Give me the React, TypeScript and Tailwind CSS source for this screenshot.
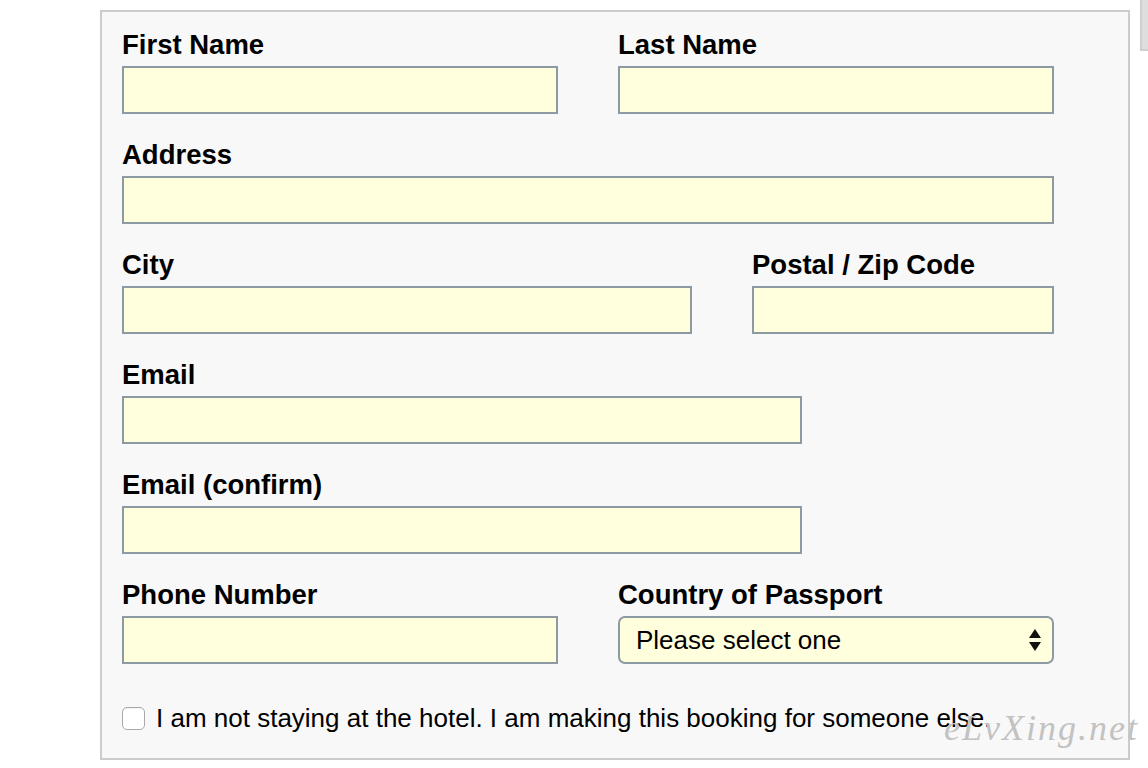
import React from 'react';

const labelCls =
  "block h-[30px] leading-[30px] text-[27.5px] font-bold text-black whitespace-nowrap";
const inputCls =
  "block h-[48px] border-2 border-[#8e9aa3] bg-[#fffedd] outline-none px-3 text-[26px]";

function Field({ label, width }: { label: string; width: string }) {
  return (
    <div className="flex flex-col gap-[6px]">
      <label className={labelCls}>{label}</label>
      <input type="text" className={`${inputCls} ${width}`} />
    </div>
  );
}

export default function App() {
  return (
    <div
      className="relative flex items-start pl-[100px] h-[768px] overflow-hidden bg-white"
      style={{ fontFamily: '"Liberation Sans", Arial, sans-serif' }}
    >
      <div className="mt-[10px] w-[1030px] border-2 border-[#cccccc] bg-[#f8f8f8] pt-[18px] pl-[20px] pb-[25px]">
        <div className="flex flex-col gap-[26px]">
          <div className="flex gap-[60px]">
            <Field label="First Name" width="w-[436px]" />
            <Field label="Last Name" width="w-[436px]" />
          </div>
          <Field label="Address" width="w-[932px]" />
          <div className="flex gap-[60px]">
            <Field label="City" width="w-[570px]" />
            <Field label="Postal / Zip Code" width="w-[302px]" />
          </div>
          <Field label="Email" width="w-[680px]" />
          <Field label="Email (confirm)" width="w-[680px]" />
          <div className="flex gap-[60px]">
            <Field label="Phone Number" width="w-[436px]" />
            <div className="flex flex-col gap-[6px]">
              <label className={labelCls}>Country of Passport</label>
              <div className="relative w-[436px]">
                <select className="block w-full h-[48px] appearance-none rounded-[7px] border-2 border-[#8e9aa3] bg-[#fffedd] pl-[16px] text-[26px] text-black outline-none">
                  <option>Please select one</option>
                </select>
                <svg
                  className="absolute right-[13px] top-[13px] pointer-events-none"
                  width="12"
                  height="22"
                  viewBox="0 0 12 22"
                >
                  <path d="M6 0 L12 9 L0 9 Z" fill="#111" />
                  <path d="M0 13 L12 13 L6 22 Z" fill="#111" />
                </svg>
              </div>
            </div>
          </div>
        </div>
        <div className="mt-[39px] flex items-center gap-[11px] h-[30px]">
          <span className="block w-[23px] h-[23px] rounded-[5px] border border-[#a9a9a9] bg-white shadow-[inset_0_1px_1px_rgba(0,0,0,0.05)]" />
          <span className="text-[26px] leading-[30px] text-black whitespace-nowrap">
            I am not staying at the hotel. I am making this booking for someone else.
          </span>
        </div>
      </div>
      <div className="ml-[10px] w-[8px] h-[51px] bg-[#dedede] border-l-2 border-b-2 border-[#cfcfcf]" />
      <div
        className="absolute left-[944px] top-[701px] text-[36px] italic tracking-[2px] text-[#c2c2c2] pointer-events-none"
        style={{ fontFamily: '"Liberation Serif", "DejaVu Serif", serif' }}
      >
        eLvXing.net
      </div>
    </div>
  );
}
